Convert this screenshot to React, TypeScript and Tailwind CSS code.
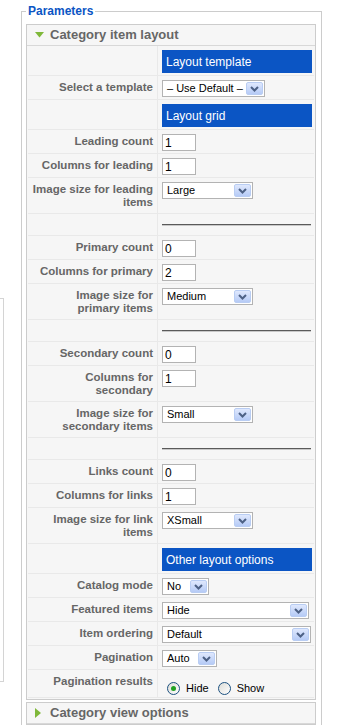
import React from 'react'

type Row =
  | { kind: 'head'; text: string }
  | { kind: 'rule' }
  | { kind: 'input'; label: string[]; value: string }
  | { kind: 'select'; label: string[]; value: string; w: string }
  | { kind: 'radio'; label: string[] }

const rows: Row[] = [
  { kind: 'head', text: 'Layout template' },
  { kind: 'select', label: ['Select a template'], value: '– Use Default –', w: 'w-[103px]' },
  { kind: 'head', text: 'Layout grid' },
  { kind: 'input', label: ['Leading count'], value: '1' },
  { kind: 'input', label: ['Columns for leading'], value: '1' },
  { kind: 'select', label: ['Image size for leading', 'items'], value: 'Large', w: 'w-[91px]' },
  { kind: 'rule' },
  { kind: 'input', label: ['Primary count'], value: '0' },
  { kind: 'input', label: ['Columns for primary'], value: '2' },
  { kind: 'select', label: ['Image size for', 'primary items'], value: 'Medium', w: 'w-[91px]' },
  { kind: 'rule' },
  { kind: 'input', label: ['Secondary count'], value: '0' },
  { kind: 'input', label: ['Columns for', 'secondary'], value: '1' },
  { kind: 'select', label: ['Image size for', 'secondary items'], value: 'Small', w: 'w-[91px]' },
  { kind: 'rule' },
  { kind: 'input', label: ['Links count'], value: '0' },
  { kind: 'input', label: ['Columns for links'], value: '1' },
  { kind: 'select', label: ['Image size for link', 'items'], value: 'XSmall', w: 'w-[91px]' },
  { kind: 'head', text: 'Other layout options' },
  { kind: 'select', label: ['Catalog mode'], value: 'No', w: 'w-[47px]' },
  { kind: 'select', label: ['Featured items'], value: 'Hide', w: 'w-[147px]' },
  { kind: 'select', label: ['Item ordering'], value: 'Default', w: 'w-[149px]' },
  { kind: 'select', label: ['Pagination'], value: 'Auto', w: 'w-[55px]' },
  { kind: 'radio', label: ['Pagination results'] },
]

export default function App() {
  return (
    <div className="flex h-[725px] w-[344px] overflow-hidden bg-white font-['Liberation_Sans',Arial,sans-serif]">
      {/* edge of the box behind */}
      <div className="mt-[298px] h-[384px] w-[4px] shrink-0 border-y border-r border-[#d4d4d4]" />

      <fieldset className="ml-[17px] mt-[4px] min-h-[780px] w-[301px] shrink-0 border border-[#cccccc] pb-[20px] pl-[4px] pr-[5px] pt-[6px]">
        <legend className="px-[2px] text-[12px] font-bold leading-[14px] text-[#0b55c4]">Parameters</legend>

        <div className="w-[290px] border border-[#cccccc]">
          <PanelTitle open text="Category item layout" />
          <div className="bg-[#f6f6f6] px-[1px] pb-[1px]">
            {rows.map((row, i) => (
              <ParamRow key={i} row={row} />
            ))}
          </div>
        </div>

        <div className="mt-[2px] w-[290px] border border-[#cccccc]">
          <PanelTitle text="Category view options" />
        </div>
      </fieldset>
    </div>
  )
}

function PanelTitle({ text, open }: { text: string; open?: boolean }) {
  return (
    <h3 className="flex h-[21px] items-center border-b border-[#d8d8d8] bg-[#f6f6f6] pl-[8px] text-[13px] font-bold text-[#666666]">
      {open ? (
        <svg width="9" height="6" viewBox="0 0 9 6" className="mr-[6px]">
          <path d="M0 0 H9 L4.5 5.5 Z" fill="#7fb83a" />
        </svg>
      ) : (
        <svg width="6" height="10" viewBox="0 0 6 10" className="mr-[9px]">
          <path d="M0 0 L6 5 L0 10 Z" fill="#7fb83a" />
        </svg>
      )}
      {text}
    </h3>
  )
}

function ParamRow({ row }: { row: Row }) {
  const label =
    row.kind === 'head' || row.kind === 'rule' ? null : (
      <>
        {row.label.map((l, i) => (
          <div key={i}>{l}</div>
        ))}
      </>
    )

  return (
    <div className="flex border-b border-[#e9e9e9]">
      <div className="w-[130px] shrink-0 border-r border-[#e9e9e9] pb-[4px] pl-[1px] pr-[4px] pt-[5px] text-right text-[11.5px] font-bold leading-[13px] text-[#666666]">
        {label}
      </div>
      <div className="min-w-0 flex-1 pl-[4px] pr-[2px]">
        {row.kind === 'head' && (
          <div className="mb-[2px] mt-[4px] flex h-[23px] items-center bg-[#0b55c4] pl-[4px] text-[12px] text-white">
            {row.text}
          </div>
        )}
        {row.kind === 'rule' && (
          <div className="h-[21px] pt-[10px]">
            <div className="w-[149px] border-b border-t border-b-[#c8c8c8] border-t-[#5a5a5a]" />
          </div>
        )}
        {row.kind === 'input' && (
          <div className="pb-[2px] pt-[4px]">
            <div className="flex h-[17px] w-[34px] items-center border border-[#b3b3b3] bg-white pl-[2px] text-[12px] leading-none text-black">
              {row.value}
            </div>
          </div>
        )}
        {row.kind === 'select' && (
          <div className="pb-[2px] pt-[4px]">
            <Select value={row.value} w={row.w} />
          </div>
        )}
        {row.kind === 'radio' && (
          <div className="flex items-center pl-[5px] pt-[10px] text-[11px] text-black">
            <Radio checked />
            <span className="ml-[6px] mr-[9px]">Hide</span>
            <Radio />
            <span className="ml-[6px]">Show</span>
          </div>
        )}
      </div>
    </div>
  )
}

function Select({ value, w }: { value: string; w: string }) {
  return (
    <div className={`flex h-[17px] items-center justify-between border border-[#b3b3b3] bg-white pl-[4px] pr-[1px] text-[11px] leading-none text-black ${w}`}>
      <span className="whitespace-nowrap">{value}</span>
      <div className="flex h-[13px] w-[17px] shrink-0 items-center justify-center rounded-[2px] border border-[#b9cdf3] bg-gradient-to-b from-[#dfe8fd] to-[#b6cbf6]">
        <svg width="9" height="6" viewBox="0 0 9 6">
          <path d="M1 1 L4.5 4.5 L8 1" stroke="#4d6185" strokeWidth="2" fill="none" />
        </svg>
      </div>
    </div>
  )
}

function Radio({ checked }: { checked?: boolean }) {
  return (
    <div className="flex h-[13px] w-[13px] items-center justify-center rounded-full border border-[#1c5180] bg-gradient-to-br from-[#dcdcd7] to-white">
      {checked && <div className="h-[5px] w-[5px] rounded-full bg-[#21a121]" />}
    </div>
  )
}
